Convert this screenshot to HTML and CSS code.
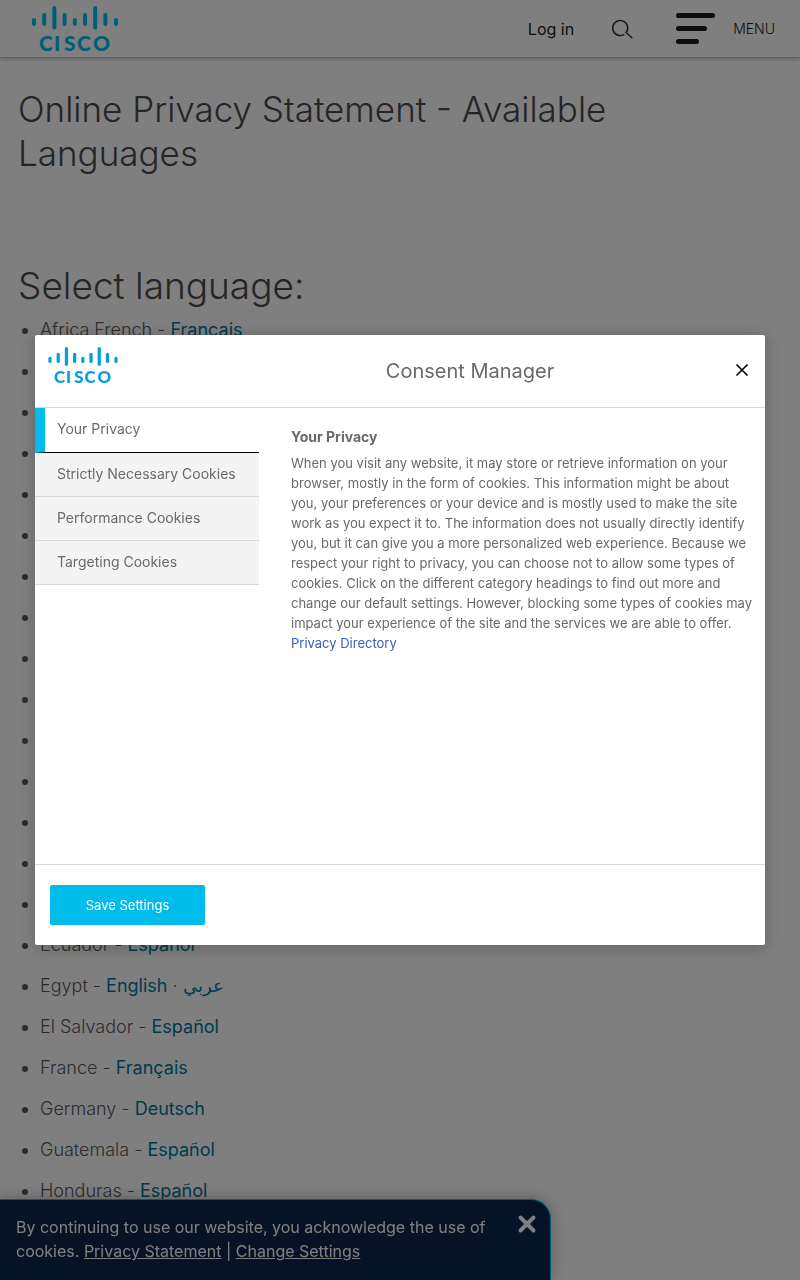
FILE: index.html
```html
<!DOCTYPE html>
<html lang="en">
<head>
    <meta charset="UTF-8">
    <meta name="viewport" content="width=device-width, initial-scale=1.0">
    <title>Online Privacy Statement - Available Languages</title>
    <link rel="stylesheet" href="styles.css">
</head>
<body>
    <!-- Logo shared by the header and the consent dialog -->
    <svg class="sprite" aria-hidden="true">
        <symbol id="cisco-logo" viewBox="0 0 86 46" overflow="visible">
            <g stroke="currentColor" stroke-width="4" stroke-linecap="round">
                <path d="M2 14v4M12.200 9v9M22.400 2v19.500M32.600 9v9M42.800 14v4M53 9v9M63.200 2v19.500M73.400 9v9M84 14v4"/>
            </g>
            <text class="logo-text" x="7 22 32 45 61" y="45">CISCO</text>
        </symbol>
    </svg>

    <header class="site-header">
        <a class="logo" href="#" aria-label="Cisco"><svg><use href="#cisco-logo"/></svg></a>
        <a class="login" href="#">Log in</a>
        <button class="search" aria-label="Search">
            <svg width="20" height="20" viewBox="0 0 20 20" fill="none" stroke="#333" stroke-width="1.500" stroke-linecap="round">
                <path d="M10.800 15.600A7.500 7.500 0 1 1 13.800 12.600L13 13.200L18.800 18.800"/>
            </svg>
        </button>
        <button class="menu">
            <svg width="39" height="31" viewBox="0 0 39 31" stroke="#1a1a1a" stroke-width="5" stroke-linecap="round">
                <path d="M2.500 2.500h34M2.500 15.500h26M2.500 28.500h18"/>
            </svg>
            MENU
        </button>
    </header>

    <main>
        <h1>Online Privacy Statement - Available Languages</h1>
        <h2>Select language:</h2>
        <ul class="languages">
            <li>Africa French - <a href="#">Français</a></li>
            <li>Algeria - <a href="#">Français</a></li>
            <li>Argentina - <a href="#">Español</a></li>
            <li>Austria - <a href="#">Deutsch</a></li>
            <li>Belgium - <a href="#">Français</a></li>
            <li>Bolivia - <a href="#">Español</a></li>
            <li>Brazil - <a href="#">Português</a></li>
            <li>Canada - <a href="#">Français</a></li>
            <li>Chile - <a href="#">Español</a></li>
            <li>China - <a href="#">English</a></li>
            <li>Colombia - <a href="#">Español</a></li>
            <li>Costa Rica - <a href="#">Español</a></li>
            <li>Czech Republic - <a href="#">English</a></li>
            <li>Denmark - <a href="#">Dansk</a></li>
            <li>Dominican Republic - <a href="#">Español</a></li>
            <li>Ecuador - <a href="#">Español</a></li>
            <li>Egypt - <a href="#">English</a> · <a href="#" lang="ar">عربي</a></li>
            <li>El Salvador - <a href="#">Español</a></li>
            <li>France - <a href="#">Français</a></li>
            <li>Germany - <a href="#">Deutsch</a></li>
            <li>Guatemala - <a href="#">Español</a></li>
            <li>Honduras - <a href="#">Español</a></li>
        </ul>
    </main>

    <div class="cookie-banner">
        <p>By continuing to use our website, you acknowledge the use of cookies. <a href="#">Privacy Statement</a> | <a href="#">Change Settings</a></p>
        <button aria-label="Close banner">
            <svg width="18" height="18" viewBox="0 0 18 18" stroke="#fff" stroke-width="4" stroke-linecap="round"><path d="M2.500 2.500l13 13M15.500 2.500l-13 13"/></svg>
        </button>
    </div>

    <div class="overlay">
        <section class="dialog" role="dialog" aria-modal="true" aria-labelledby="dialog-title">
            <div class="dialog-header">
                <svg class="dialog-logo" role="img" aria-label="Cisco"><use href="#cisco-logo"/></svg>
                <h2 id="dialog-title">Consent Manager</h2>
                <button aria-label="Close">
                    <svg width="12" height="12" viewBox="0 0 12 12" stroke="#000" stroke-width="1.700"><path d="M.5.5l11 11M11.500.5l-11 11"/></svg>
                </button>
            </div>
            <div class="dialog-body">
                <div class="tabs" role="tablist">
                    <button class="active" role="tab" aria-selected="true">Your Privacy</button>
                    <button role="tab">Strictly Necessary Cookies</button>
                    <button role="tab">Performance Cookies</button>
                    <button role="tab">Targeting Cookies</button>
                </div>
                <div class="tab-content" role="tabpanel">
                    <h3>Your Privacy</h3>
                    <p>When you visit any website, it may store or retrieve information on your browser, mostly in the form of cookies. This information might be about you, your preferences or your device and is mostly used to make the site work as you expect it to. The information does not usually directly identify you, but it can give you a more personalized web experience. Because we respect your right to privacy, you can choose not to allow some types of cookies. Click on the different category headings to find out more and change our default settings. However, blocking some types of cookies may impact your experience of the site and the services we are able to offer.</p>
                    <a href="#">Privacy Directory</a>
                </div>
            </div>
            <div class="dialog-footer">
                <button>Save Settings</button>
            </div>
        </section>
    </div>
</body>
</html>
```
FILE: styles.css
```css
* {
    box-sizing: border-box;
}

body {
    margin: 0;
    background-color: #fff;
    color: #58585b;
    font-family: Inter, "Noto Sans", sans-serif;
    font-size: 18px;
    overflow: hidden;
}

button {
    padding: 0;
    border: none;
    background: none;
    font: inherit;
    color: inherit;
    cursor: pointer;
}

svg {
    display: block;
    overflow: visible;
}

.sprite {
    position: absolute;
    width: 0;
    height: 0;
}

.logo-text {
    fill: currentColor;
    font-family: Lato, sans-serif;
    font-size: 21px;
    font-weight: 900;
}

/* Header */
.site-header {
    display: flex;
    align-items: center;
    height: 58px;
    padding: 0 25px 0 32px;
    border-bottom: 1px solid #c0c0c0;
    box-shadow: 0 1px 4px rgba(0, 0, 0, 0.25);
    color: #1a1a1a;
}

.logo {
    margin-right: auto;
    color: #00bceb;
}

.logo svg {
    width: 86px;
    height: 46px;
}

.login {
    font-size: 16px;
    color: #1a1a1a;
    text-decoration: none;
}

.search {
    margin: 0 43px 0 39px;
}

.menu {
    display: flex;
    align-items: center;
    gap: 18px;
    font-size: 14px;
    font-weight: 300;
}

/* Page content */
main {
    padding: 29px 18px 0;
}

h1, main h2 {
    margin: 0;
    color: #4a4a4c;
    font-size: 35px;
    line-height: 44px;
    font-weight: 300;
}

main h2 {
    margin-top: 89px;
    font-size: 37px;
}

.languages {
    margin: 8px 0 0;
    padding-left: 22px;
}

.languages li {
    margin-bottom: 14px;
    line-height: 27px;
    font-weight: 300;
}

.languages li::marker {
    font-size: 18px;
}

.languages a {
    color: #007698;
    font-weight: 400;
    text-decoration: none;
}

/* Cookie banner */
.cookie-banner {
    position: fixed;
    left: 0;
    bottom: 0;
    display: flex;
    align-items: flex-start;
    gap: 24px;
    width: 100%;
    max-width: 551px;
    padding: 15px 14px 17px 16px;
    border-top: 1px solid #00bceb;
    border-right: 1px solid #00bceb;
    border-radius: 0 20px 0 0;
    background-color: #0d274d;
    box-shadow: 0 0 16px rgba(0, 0, 0, 0.3);
    color: #fff;
    font-size: 16px;
    line-height: 24px;
}

.cookie-banner p {
    flex: 1;
    margin: 0;
}

.cookie-banner a {
    color: #fff;
}

/* Consent dialog */
.overlay {
    position: fixed;
    inset: 0;
    display: flex;
    align-items: center;
    justify-content: center;
    padding: 35px;
    background-color: rgba(0, 0, 0, 0.5);
}

.dialog {
    width: 100%;
    max-width: 1000px;
    border-radius: 2px;
    background-color: #fff;
    box-shadow: 0 2px 16px rgba(0, 0, 0, 0.25);
    color: #696969;
    overflow: hidden;
}

.dialog-header {
    display: flex;
    align-items: center;
    padding: 12px 17px 23px 13px;
    border-bottom: 1px solid #d8d8d8;
}

.dialog-logo {
    width: 70px;
    height: 37px;
    color: #049fd9;
}

.dialog-header h2 {
    flex: 1;
    margin: 0;
    padding: 10px 0 0 86px;
    font-size: 20px;
    line-height: 24px;
    font-weight: 400;
    text-align: center;
}

.dialog-header button {
    padding-top: 8px;
}

.dialog-body {
    display: flex;
    min-height: 456px;
}

.tabs {
    width: 224px;
}

.tabs button {
    display: block;
    width: 100%;
    height: 44px;
    padding: 0 0 3px 22px;
    border-bottom: 1px solid #d8d8d8;
    background-color: #f4f4f4;
    font-size: 14px;
    text-align: left;
}

.tabs .active {
    height: 45px;
    padding-left: 12px;
    border-left: 10px solid #00bceb;
    border-bottom-color: #000;
    background-color: #fff;
}

.tab-content {
    flex: 1;
    padding: 19px 10px 20px 32px;
    font-size: 13px;
    line-height: 20px;
}

.tab-content h3 {
    margin: 0 0 6px;
    font-size: 14px;
    font-weight: 700;
}

.tab-content p {
    margin: 0;
}

.tab-content a {
    color: #3860be;
    text-decoration: none;
}

.dialog-footer {
    padding: 20px 15px;
    border-top: 1px solid #d8d8d8;
}

.dialog-footer button {
    min-width: 155px;
    height: 40px;
    border-radius: 2px;
    background-color: #00bceb;
    color: #fff;
    font-size: 13px;
}
```
